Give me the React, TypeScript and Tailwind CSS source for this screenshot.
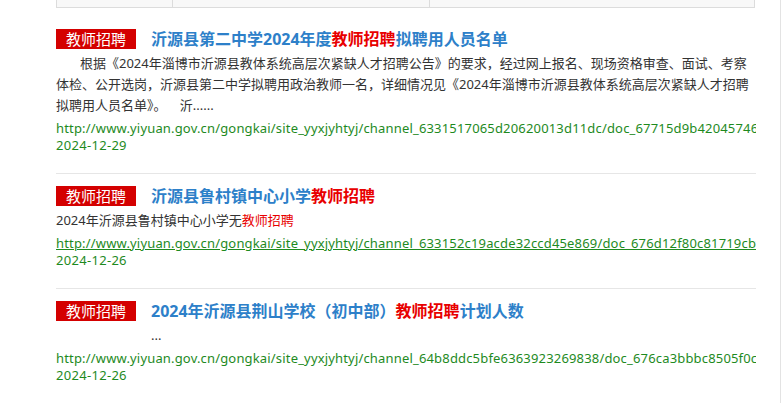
const items = [
  {
    title: [
      { t: '沂源县第二中学2024年度' },
      { t: '教师招聘', hl: true },
      { t: '拟聘用人员名单' },
    ],
    body: [
      {
        t: '根据《2024年淄博市沂源县教体系统高层次紧缺人才招聘公告》的要求，经过网上报名、现场资格审查、面试、考察体检、公开选岗，沂源县第二中学拟聘用政治教师一名，详细情况见《2024年淄博市沂源县教体系统高层次紧缺人才招聘拟聘用人员名单》。\u3000\u00a0\u00a0沂......',
      },
    ],
    indent: 'indent-[24px]',
    url: 'http://www.yiyuan.gov.cn/gongkai/site_yyxjyhtyj/channel_6331517065d20620013d11dc/doc_67715d9b42045746',
    date: '2024-12-29',
    underline: false,
  },
  {
    title: [{ t: '沂源县鲁村镇中心小学' }, { t: '教师招聘', hl: true }],
    body: [{ t: '2024年沂源县鲁村镇中心小学无' }, { t: '教师招聘', hl: true }],
    indent: '',
    url: 'http://www.yiyuan.gov.cn/gongkai/site_yyxjyhtyj/channel_633152c19acde32ccd45e869/doc_676d12f80c81719cbf',
    date: '2024-12-26',
    underline: true,
  },
  {
    title: [
      { t: '2024年沂源县荆山学校（初中部）' },
      { t: '教师招聘', hl: true },
      { t: '计划人数' },
    ],
    body: [{ t: '...' }],
    indent: 'indent-[95px]',
    url: 'http://www.yiyuan.gov.cn/gongkai/site_yyxjyhtyj/channel_64b8ddc5bfe6363923269838/doc_676ca3bbbc8505f0c',
    date: '2024-12-26',
    underline: false,
  },
]

export default function App() {
  return (
    <div
      className="h-[403px] w-[781px] overflow-hidden border-r border-[#e3e3e3] bg-white"
      style={{ fontFamily: '"Noto Sans", "Noto Sans CJK SC", sans-serif' }}
    >
      <div className="ml-[56px] w-[700px]">
        {/* table bottom above results */}
        <div className="mr-[1px] flex h-[8px] border-x border-b border-[#dcdcdc] bg-[#f8f8f8]">
          <div className="w-[116px] border-r border-[#dcdcdc]" />
          <div className="w-[257px] border-r border-[#dcdcdc]" />
          <div className="flex-1" />
        </div>

        <div className="pt-[9px]">
          {items.map((item, i) => (
            <div key={i} className="border-b border-[#e6e6e6] pt-[10px] pb-[19px]">
              <div className="flex h-[24px] items-center">
                <span className="flex h-[20px] w-[80px] shrink-0 items-center justify-center bg-[#d40000] text-[15px] leading-none text-white">
                  教师招聘
                </span>
                <a className="ml-[15px] whitespace-nowrap text-[16px] font-bold text-[#2d80c9]">
                  {item.title.map((s, j) => (
                    <span key={j} className={s.hl ? 'text-[#e80000]' : ''}>
                      {s.t}
                    </span>
                  ))}
                </a>
              </div>
              <p className={`mt-[2px] text-[13px] leading-[21px] text-[#333] ${item.indent}`}>
                {item.body.map((s, j) => (
                  <span key={j} className={s.hl ? 'text-[#e80000]' : ''}>
                    {s.t}
                  </span>
                ))}
              </p>
              <div className="mt-[4px] text-[13px] leading-[17px] tracking-[0.17px] text-[#1e8a1e]">
                <div className={`overflow-hidden whitespace-nowrap ${item.underline ? 'underline' : ''}`}>
                  {item.url}
                </div>
                <div className="tracking-[0.3px]">{item.date}</div>
              </div>
            </div>
          ))}
        </div>
      </div>
    </div>
  )
}
